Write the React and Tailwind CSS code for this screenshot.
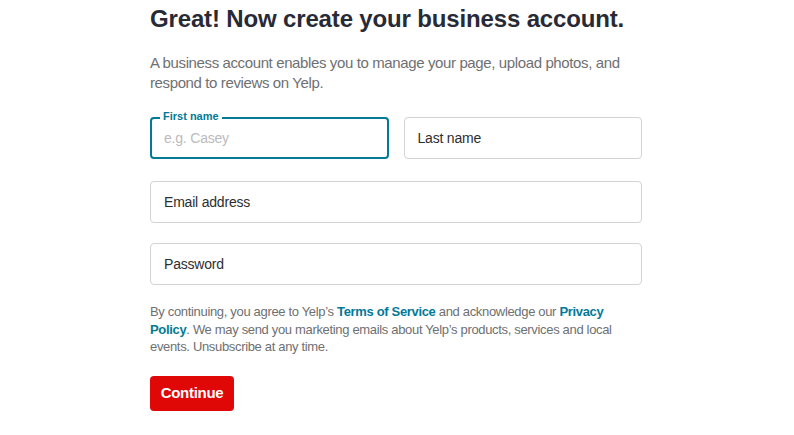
import { useState } from 'react';

const font = { fontFamily: '"Liberation Sans", Arial, Helvetica, sans-serif' };

function Field({ label, placeholder, focused, type = 'text', className = '' }) {
  if (focused) {
    return (
      <div className={`relative ${className}`}>
        <span className="absolute -top-[7px] left-[10px] bg-white px-[3px] text-[11px] font-bold leading-[13px] text-[#027a97]">
          {label}
        </span>
        <input
          type={type}
          placeholder={placeholder}
          className="h-[42px] w-full rounded-[4px] border-2 border-[#027a97] px-[12px] text-[14px] tracking-[-0.2px] text-[#2d2e2f] outline-none placeholder:text-[#bbbac0]"
        />
      </div>
    );
  }
  return (
    <div className={className}>
      <input
        type={type}
        placeholder={label}
        className="h-[42px] w-full rounded-[4px] border border-[#d3d3d6] px-[13px] text-[14px] tracking-[-0.2px] text-[#2d2e2f] outline-none placeholder:text-[#2d2e2f]"
      />
    </div>
  );
}

export default function App() {
  const [agreed] = useState(true);

  return (
    <div className="min-h-screen bg-white" style={font}>
      <div className="ml-[150px] w-[492px] pt-[4px]">
        <h1 className="whitespace-nowrap text-[24px] font-bold leading-[30px] tracking-[-0.15px] text-[#282a36]">
          Great! Now create your business account.
        </h1>
        <p className="mt-[19px] text-[15px] leading-[20px] tracking-[-0.38px] text-[#6e7072]">
          A business account enables you to manage your page, upload photos, and
          <br />
          respond to reviews on Yelp.
        </p>

        <form className="mt-[24px] flex flex-col gap-[21px]">
          <div className="flex gap-[15px]">
            <Field label="First name" placeholder="e.g. Casey" focused className="flex-1" />
            <Field label="Last name" className="flex-1" />
          </div>
          <Field label="Email address" type="email" className="mt-[1px]" />
          <Field label="Password" type="password" className="-mt-[1px]" />

          {agreed && (
            <p className="-mt-[3px] text-[13px] leading-[17.5px] tracking-[-0.33px] text-[#6e7072]">
              By continuing, you agree to Yelp’s{' '}
              <a href="#" className="font-bold text-[#027a97]">Terms of Service</a> and acknowledge our{' '}
              <a href="#" className="font-bold text-[#027a97]">Privacy</a>
              <br />
              <a href="#" className="font-bold text-[#027a97]">Policy</a>. We may send you marketing emails about
              Yelp’s products, services and local
              <br />
              events. Unsubscribe at any time.
            </p>
          )}

          <div className="-mt-[1px]">
            <button
              type="button"
              className="h-[35px] w-[84px] rounded-[4px] bg-[#e00707] text-[15px] font-bold tracking-[-0.3px] text-white"
            >
              Continue
            </button>
          </div>
        </form>
      </div>
    </div>
  );
}
